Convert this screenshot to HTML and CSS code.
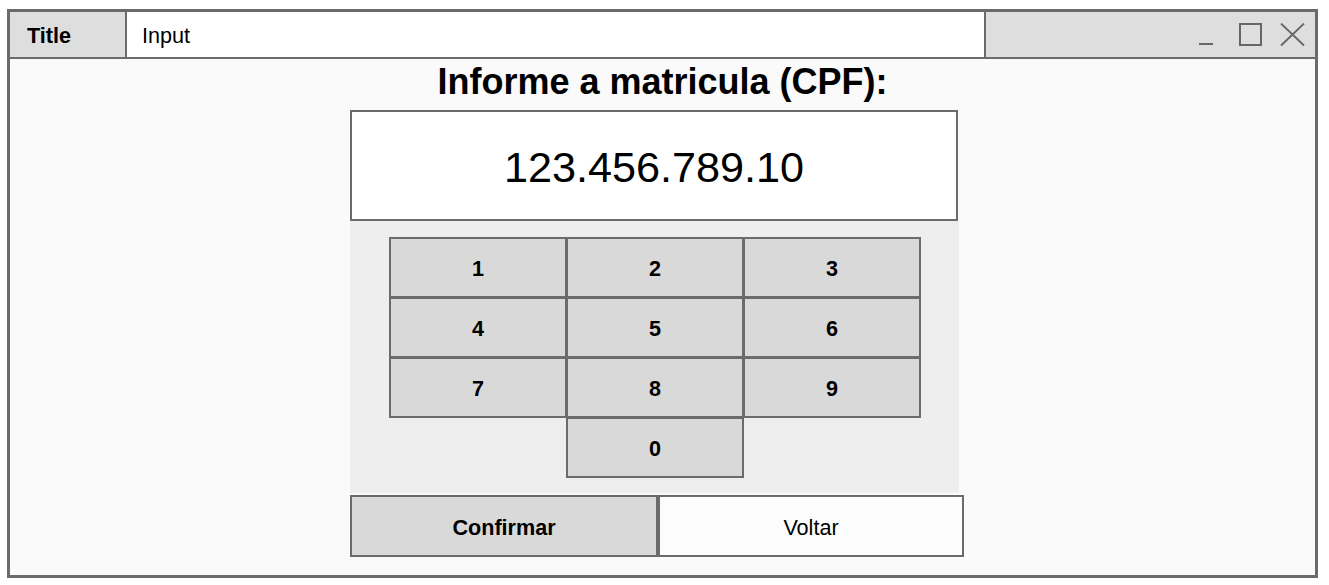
FILE: index.html
```html
<!DOCTYPE html>
<html lang="pt">
<head>
<meta charset="utf-8">
<title>Input</title>
<link rel="stylesheet" href="styles.css">
</head>
<body>
<div class="window">
  <div class="titlebar">
    <div class="tb-title">Title</div>
    <div class="tb-input">Input</div>
    <div class="tb-controls">
      <svg class="ctrl-icons" width="106" height="24" viewBox="0 0 106 24">
        <line x1="0" y1="21" x2="14" y2="21" stroke="#666" stroke-width="2"/>
        <rect x="41" y="1" width="21" height="21" fill="none" stroke="#666" stroke-width="2"/>
        <line x1="82" y1="0.5" x2="105" y2="22.5" stroke="#666" stroke-width="1.8"/>
        <line x1="105" y1="0.5" x2="82" y2="22.5" stroke="#666" stroke-width="1.8"/>
      </svg>
    </div>
  </div>
  <div class="content">
    <h1 class="heading">Informe a matricula (CPF):</h1>
    <div class="column">
      <div class="display">123.456.789.10</div>
      <div class="keypad">
        <div class="keys">
          <div class="key">1</div>
          <div class="key">2</div>
          <div class="key">3</div>
          <div class="key">4</div>
          <div class="key">5</div>
          <div class="key">6</div>
          <div class="key">7</div>
          <div class="key">8</div>
          <div class="key">9</div>
          <div class="key key-zero">0</div>
        </div>
      </div>
      <div class="actions">
        <div class="btn btn-primary">Confirmar</div>
        <div class="btn btn-secondary">Voltar</div>
      </div>
    </div>
  </div>
</div>
</body>
</html>
```

FILE: styles.css
```css
html, body {
  margin: 0;
  padding: 0;
  background: #ffffff;
}

body {
  font-family: "Liberation Sans", Arial, sans-serif;
  color: #000;
}

.window {
  box-sizing: border-box;
  margin: 9px 0 0 7px;
  width: 1311px;
  height: 569px;
  border: 3px solid #6b6b6b;
  background: #fafafa;
  display: flex;
  flex-direction: column;
}

.titlebar {
  display: flex;
  height: 45px;
  border-bottom: 2px solid #6b6b6b;
  font-size: 21.6px;
}

.tb-title {
  width: 117px;
  background: #dedede;
  border-right: 2px solid #6b6b6b;
  display: flex;
  align-items: center;
  padding: 2px 0 0 17px;
  box-sizing: border-box;
  font-weight: bold;
}

.tb-input {
  width: 859px;
  box-sizing: border-box;
  background: #ffffff;
  border-right: 2px solid #6b6b6b;
  display: flex;
  align-items: center;
  padding: 2px 0 0 15px;
}

.tb-controls {
  flex: 1;
  background: #dedede;
  display: flex;
  align-items: center;
  justify-content: flex-end;
  padding-right: 10px;
}

.ctrl-icons {
  display: block;
}

.content {
  flex: 1;
  display: flex;
  flex-direction: column;
}

.heading {
  margin: 2px 0 0 0;
  font-size: 36px;
  line-height: 41px;
  font-weight: bold;
  text-align: center;
}

.column {
  margin: 8px 0 0 340px;
  width: 614px;
  display: flex;
  flex-direction: column;
}

.display {
  box-sizing: border-box;
  width: 608px;
  height: 111px;
  border: 2px solid #6b6b6b;
  background: #ffffff;
  display: flex;
  align-items: center;
  justify-content: center;
  padding-top: 4px;
  font-size: 43.2px;
}

.keypad {
  box-sizing: border-box;
  width: 609px;
  height: 272px;
  background: #eeeeee;
  padding: 16px 0 0 39px;
}

.keys {
  display: grid;
  grid-template-columns: repeat(3, 177px);
  grid-auto-rows: 60px;
}

.key {
  margin: 0 -1px -1px 0;
  border: 2px solid #6b6b6b;
  background: #d9d9d9;
  display: flex;
  align-items: center;
  justify-content: center;
  padding-top: 3px;
  font-size: 21.6px;
  font-weight: bold;
}

.key-zero {
  grid-column: 2;
}

.actions {
  display: flex;
  margin-top: 2px;
  height: 62px;
}

.btn {
  box-sizing: border-box;
  border: 2px solid #6b6b6b;
  display: flex;
  align-items: center;
  justify-content: center;
  padding-top: 3px;
  font-size: 21.6px;
}

.btn-primary {
  width: 308px;
  background: #d9d9d9;
  font-weight: bold;
}

.btn-secondary {
  width: 306px;
  background: #fcfcfc;
}
```
